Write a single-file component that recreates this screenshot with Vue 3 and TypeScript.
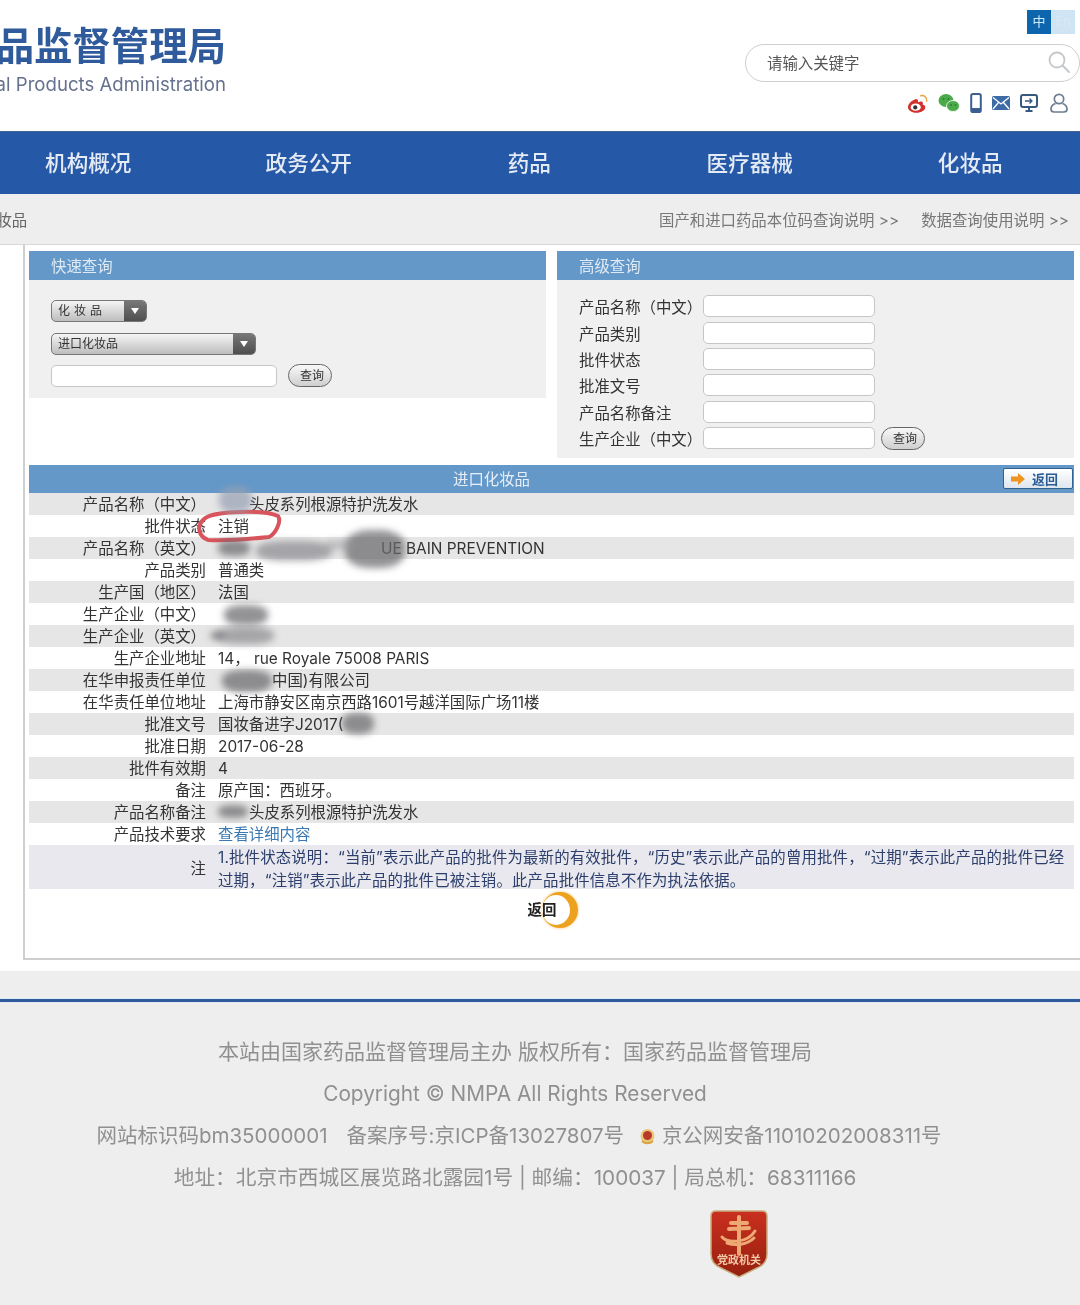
<script setup lang="ts">
interface Row {
  label: string
  value: string
  indent?: number
  link?: boolean
}

const navItems: string[] = ['机构概况', '政务公开', '药品', '医疗器械', '化妆品']

const advancedLabels: string[] = ['产品名称（中文）', '产品类别', '批件状态', '批准文号', '产品名称备注', '生产企业（中文）']

const rows: Row[] = [
  { label: '产品名称（中文）', value: '头皮系列根源特护洗发水', indent: 31 },
  { label: '批件状态', value: '注销' },
  { label: '产品名称（英文）', value: 'UE BAIN PREVENTION', indent: 163 },
  { label: '产品类别', value: '普通类' },
  { label: '生产国（地区）', value: '法国' },
  { label: '生产企业（中文）', value: '' },
  { label: '生产企业（英文）', value: '' },
  { label: '生产企业地址', value: '14， rue Royale 75008 PARIS' },
  { label: '在华申报责任单位', value: '中国)有限公司', indent: 54 },
  { label: '在华责任单位地址', value: '上海市静安区南京西路1601号越洋国际广场11楼' },
  { label: '批准文号', value: '国妆备进字J2017(' },
  { label: '批准日期', value: '2017-06-28' },
  { label: '批件有效期', value: '4' },
  { label: '备注', value: '原产国：西班牙。' },
  { label: '产品名称备注', value: '头皮系列根源特护洗发水', indent: 31 },
  { label: '产品技术要求', value: '查看详细内容', link: true },
]

const smudges: string[] = ['s1', 's2', 's3', 's4', 's5', 's6', 's7', 's8', 's9', 's10', 's11']
</script>

<template>
  <div class="page">
    <header class="top">
      <div class="brand">
        <div class="brand-cn">国家药品监督管理局</div>
        <div class="brand-en">National Medical Products Administration</div>
      </div>
      <div class="tools">
        <div class="lang"><span class="lang-on">中</span><span class="lang-off">En</span></div>
        <div class="search">
          <span>请输入关键字</span>
          <svg width="24" height="24" viewBox="0 0 24 24" fill="none" stroke="#c4c7cb" stroke-width="1.8">
            <circle cx="10" cy="10" r="7.5" />
            <path d="M15.5 15.5 22 22" stroke-linecap="round" />
          </svg>
        </div>
        <div class="icons">
          <svg width="22" height="21" viewBox="0 0 24 22">
            <path d="M10 6c-4 1-9 5-9 9 0 3 4 6 9 6 6 0 10-3 10-6 0-2-2-3-3-3 1-2 0-4-3-3l-2 .6c.4-2-.4-3.600-2-3.600z" fill="#d2322d" />
            <ellipse cx="9.500" cy="15" rx="5.500" ry="4" fill="#fff" />
            <circle cx="9" cy="15.300" r="2.300" fill="#333" />
            <path d="M15 2.500c4-1 7 2 6.500 6" fill="none" stroke="#e8a33c" stroke-width="1.600" stroke-linecap="round" />
          </svg>
          <svg width="22" height="20" viewBox="0 0 22 20">
            <ellipse cx="8" cy="7.500" rx="7.500" ry="6.500" fill="#4bab4a" />
            <ellipse cx="15" cy="13" rx="6.500" ry="5.500" fill="#4bab4a" stroke="#fff" stroke-width=".8" />
            <circle cx="5.500" cy="6" r="1" fill="#2f7d30" />
            <circle cx="10.500" cy="6" r="1" fill="#2f7d30" />
            <circle cx="13" cy="12" r=".9" fill="#2f7d30" />
            <circle cx="17.500" cy="12" r=".9" fill="#2f7d30" />
          </svg>
          <svg width="12" height="20" viewBox="0 0 12 20">
            <rect x="1.200" y="1" width="9.600" height="18" rx="1.800" fill="#fff" stroke="#3c5f92" stroke-width="2" />
            <rect x="2" y="15" width="8" height="3" fill="#3c5f92" />
          </svg>
          <svg width="18" height="14" viewBox="0 0 18 14">
            <rect width="18" height="14" rx="1.500" fill="#3c6ba5" />
            <path d="M1 1.500 9 8l8-6.500M1 13l5.500-6.500M17 13l-5.500-6.500" fill="none" stroke="#fff" stroke-width="1.300" />
          </svg>
          <svg width="18" height="18" viewBox="0 0 18 18">
            <rect x="1" y="1" width="16" height="12" rx="2" fill="#fff" stroke="#36597f" stroke-width="2" />
            <path d="M5 7h7M9.500 4.500 12 7 9.500 9.500" fill="none" stroke="#36597f" stroke-width="1.300" />
            <path d="M9 13v3M5.500 17h7" stroke="#36597f" stroke-width="2" />
          </svg>
          <svg width="18" height="20" viewBox="0 0 18 20" fill="none" stroke="#6f7d91" stroke-width="1.700">
            <circle cx="9" cy="6" r="4.700" />
            <path d="M5.500 10.500C2.800 11.500 1 13.500 1 16c0 2 1 3 3 3h10c2 0 3-1 3-3 0-2.500-1.800-4.500-4.500-5.500" />
          </svg>
        </div>
      </div>
    </header>

    <nav class="nav">
      <a v-for="item in navItems" :key="item" class="nav-item">{{ item }}</a>
    </nav>

    <div class="crumb">
      <span class="crumb-left">化妆品</span>
      <div class="crumb-links">
        <span>国产和进口药品本位码查询说明 &gt;&gt;</span>
        <span>数据查询使用说明 &gt;&gt;</span>
      </div>
    </div>

    <main class="main">
      <div class="panels">
        <section class="panel quick">
          <h3 class="panel-head">快速查询</h3>
          <div class="quick-body">
            <div class="select small">
              <span class="spaced">化妆品</span>
              <i class="arrow"></i>
            </div>
            <div class="select wide">
              <span>进口化妆品</span>
              <i class="arrow"></i>
            </div>
            <div class="search-line">
              <div class="field long"></div>
              <button class="pill">查询</button>
            </div>
          </div>
        </section>
        <section class="panel advanced">
          <h3 class="panel-head">高级查询</h3>
          <div class="adv-body">
            <div v-for="(label, i) in advancedLabels" :key="label" class="adv-row">
              <label>{{ label }}</label>
              <div class="field"></div>
              <button v-if="i === advancedLabels.length - 1" class="pill">查询</button>
            </div>
          </div>
        </section>
      </div>

      <section class="detail">
        <div class="detail-head">
          <span class="detail-title">进口化妆品</span>
          <button class="back">
            <svg width="14" height="12" viewBox="0 0 14 12"><path d="M0 3.500h7V0l7 6-7 6V8.500H0z" fill="#ee9420" /></svg>
            <span>返回</span>
          </button>
        </div>
        <div v-for="row in rows" :key="row.label" class="row">
          <div class="row-label">{{ row.label }}</div>
          <div class="row-value" :class="{ link: row.link }" :style="{ paddingLeft: (row.indent ?? 0) + 'px' }">{{ row.value }}</div>
        </div>
        <div class="row note">
          <div class="row-label">注</div>
          <div class="row-value note-text">1.批件状态说明：“当前”表示此产品的批件为最新的有效批件，“历史”表示此产品的曾用批件，“过期”表示此产品的批件已经<br />过期，“注销”表示此产品的批件已被注销。此产品批件信息不作为执法依据。</div>
        </div>
      </section>

      <div class="return-wrap">
        <div class="moon"><div class="moon-inner"></div><span>返回</span></div>
      </div>
    </main>

    <footer class="footer">
      <p>本站由国家药品监督管理局主办 版权所有：国家药品监督管理局</p>
      <p class="copyright">Copyright © NMPA All Rights Reserved</p>
      <p class="record">
        <span>网站标识码bm35000001</span>
        <span>备案序号:京ICP备13027807号</span>
        <span class="police">
          <svg width="17" height="17" viewBox="0 0 17 17">
            <circle cx="8.500" cy="8" r="7" fill="#e9c67a" />
            <circle cx="8.500" cy="7.500" r="4.500" fill="#b8392a" />
            <path d="M3 13c3 3 8 3 11 0" fill="none" stroke="#d9a441" stroke-width="2" />
          </svg>
          京公网安备11010202008311号
        </span>
      </p>
      <p class="address">地址：北京市西城区展览路北露园1号 | 邮编：100037 | 局总机：68311166</p>
      <svg class="shield" width="58" height="70" viewBox="0 0 58 70">
        <defs>
          <linearGradient id="shieldFill" x1="0" y1="0" x2="0" y2="1">
            <stop offset="0" stop-color="#c9301f" />
            <stop offset="1" stop-color="#96200f" />
          </linearGradient>
        </defs>
        <path d="M6 3h46q5 0 5 5v38q0 10-10 14L29 69 11 60Q1 56 1 46V8q0-5 5-5z" fill="url(#shieldFill)" stroke="#c9ad7f" stroke-width="1.500" />
        <path d="M29 9v37M21 15h16M19 21l20-1" stroke="#eea874" stroke-width="4" fill="none" stroke-linecap="round" />
        <path d="M12 29c5 6 25 7 33-6M17 35c8 3 20 2 27-5" stroke="#eea874" stroke-width="3" fill="none" stroke-linecap="round" />
        <text x="29" y="56" text-anchor="middle" class="shield-text">党政机关</text>
      </svg>
    </footer>

    <svg class="ring" width="90" height="36" viewBox="0 0 90 36">
      <path d="M18 7C35 3 70 2 83 8c4 6-3 18-9 21-19 2-44 4-61 3C3 28 2 18 8 12c3-3 8-5 14-6" fill="none" stroke="#d9545c" stroke-width="4" stroke-linecap="round" />
    </svg>
    <div v-for="s in smudges" :key="s" class="smudge" :class="s"></div>
  </div>
</template>

<style>
html, body { margin: 0; background: #fff; }
</style>

<style scoped>
.page {
  position: relative;
  width: 1080px;
  height: 1305px;
  overflow: hidden;
  background: #fff;
  color: #333;
  font-family: Inter, "Noto Sans CJK SC", sans-serif;
  font-size: 15.4px;
  text-spacing-trim: space-all;
  filter: blur(0.45px);
}

.top {
  height: 131px;
  display: flex;
  justify-content: space-between;
}
.brand {
  width: 226px;
  padding-top: 22px;
  overflow: hidden;
  display: flex;
  flex-direction: column;
  align-items: flex-end;
  white-space: nowrap;
  flex-shrink: 0;
}
.brand-cn {
  font-size: 38.4px;
  line-height: 48px;
  font-weight: 700;
  color: #2f5a9c;
}
.brand-en {
  font-size: 18.6px;
  line-height: 24px;
  margin-top: 2px;
  color: #65718f;
}
.tools {
  width: 335px;
  padding-top: 10px;
  display: flex;
  flex-direction: column;
  align-items: flex-end;
}
.lang {
  display: flex;
  margin-right: 5px;
  height: 24px;
  line-height: 23px;
  font-size: 13px;
  text-align: center;
}
.lang-on { width: 24px; background: #0d65ad; color: #cfe8fb; }
.lang-off { width: 24px; background: #cfe4f5; color: #d8e9f6; }
.search {
  box-sizing: border-box;
  width: 335px;
  height: 38px;
  margin-top: 10px;
  padding: 0 8px 2px 21px;
  border: 1.5px solid #cfcfcf;
  border-radius: 19px;
  display: flex;
  align-items: center;
  justify-content: space-between;
  color: #555;
  font-size: 15.4px;
}
.icons {
  display: flex;
  align-items: center;
  height: 22px;
  margin-top: 10px;
  margin-right: 12px;
  gap: 11px;
}
.icons svg:nth-child(2) { margin-left: -2px; }
.icons svg:nth-child(3) { margin-left: -1px; }
.icons svg:nth-child(4) { margin-left: -1px; }
.icons svg:nth-child(5) { margin-left: -1px; }
.icons svg:nth-child(6) { margin-left: 1px; }

.nav {
  height: 63px;
  margin-left: -22px;
  padding-bottom: 2px;
  box-sizing: border-box;
  display: grid;
  grid-template-columns: repeat(5, 220.5px);
  align-items: center;
  background: #2658a8;
  box-shadow: inset 0 1px 0 #40628f;
}
.nav-item {
  text-align: center;
  font-size: 21.6px;
  font-weight: 500;
  color: #e4ebf5;
}

.crumb {
  height: 51px;
  box-sizing: border-box;
  background: #eeeeee;
  display: flex;
  align-items: center;
  justify-content: space-between;
  color: #777;
  font-size: 15.4px;
  border-bottom: 1px solid #dcd6d6;
}
.crumb-left { margin-left: -19px; color: #666; }
.crumb-links {
  display: flex;
  gap: 22px;
  margin-right: 11px;
}

.main {
  box-sizing: border-box;
  height: 715px;
  margin-left: 23px;
  padding: 6px 6px 0 4px;
  border-left: 2px solid #cfcfcf;
  border-bottom: 2px solid #cfcfcf;
}
.panels {
  height: 214px;
  display: flex;
  align-items: flex-start;
  gap: 11px;
}
.panel {
  flex: 1;
  background: #f0f0f0;
}
.quick { height: 147px; }
.advanced { height: 207px; }
.panel-head {
  margin: 0;
  height: 29px;
  padding-left: 22px;
  background: #6398c9;
  color: #dfeaf5;
  font-size: 15.4px;
  font-weight: 400;
  line-height: 31px;
}
.quick-body {
  padding: 20px 0 0 22px;
  display: flex;
  flex-direction: column;
  align-items: flex-start;
}
.select {
  box-sizing: border-box;
  height: 22px;
  display: flex;
  align-items: center;
  justify-content: space-between;
  padding-left: 6px;
  border: 1.5px solid #777;
  border-radius: 5px;
  background: linear-gradient(#f5f5f5, #bdbdbd);
  font-size: 12px;
  line-height: 16px;
  overflow: hidden;
}
.select span { margin-top: -1px; }
.select.small { width: 96px; }
.select.wide { width: 205px; margin-top: 11px; }
.spaced { letter-spacing: 4px; }
.arrow {
  position: relative;
  width: 22px;
  height: 100%;
  background: linear-gradient(#777, #4f4f4f);
}
.arrow::after {
  content: "";
  position: absolute;
  left: 7px;
  top: 7px;
  border-left: 4px solid transparent;
  border-right: 4px solid transparent;
  border-top: 6px solid #fff;
}
.search-line {
  margin-top: 9px;
  display: flex;
  align-items: center;
  gap: 11px;
}
.field {
  box-sizing: border-box;
  width: 172px;
  height: 22px;
  background: #fff;
  border: 1.5px solid #c6c6c6;
  border-radius: 5px;
}
.field.long { width: 226px; }
.pill {
  box-sizing: border-box;
  width: 44px;
  height: 23px;
  padding: 0 0 2px 4px;
  border: 1.5px solid #666;
  border-radius: 12px;
  background: linear-gradient(#f8f8f8, #cfcfcf);
  color: #333;
  font: 12px "Noto Sans CJK SC", sans-serif;
  line-height: 17px;
}
.adv-body { padding: 13px 0 0 22px; }
.adv-row {
  height: 26.4px;
  display: flex;
  align-items: center;
}
.adv-row label { width: 124px; white-space: nowrap; }
.adv-row .pill { margin-left: 6px; }

.detail-head {
  position: relative;
  height: 28px;
  background: #6398c9;
  color: #e6eef7;
  text-align: center;
  line-height: 29px;
  padding-right: 120px;
}
.detail-title { display: inline-block; }
.back {
  position: absolute;
  right: 1px;
  top: 3px;
  box-sizing: border-box;
  width: 70px;
  height: 21px;
  padding: 0 0 0 7px;
  display: flex;
  align-items: center;
  gap: 7px;
  background: linear-gradient(#fff, #dfe6ee);
  border: 1.5px solid #31628f;
  border-radius: 2px;
  color: #2a5d96;
  font: 700 13px "Noto Sans CJK SC", sans-serif;
}
.row {
  display: grid;
  grid-template-columns: 177px 1fr;
  column-gap: 12px;
  height: 22px;
  line-height: 24px;
  white-space: nowrap;
}
.row:nth-of-type(even) { background: #e6e6e6; }
.row-label { text-align: right; }
.link { color: #3b79b5; }
.row.note {
  height: 44px;
  align-items: center;
  background: #e8e8ee;
}
.note-text {
  color: #2c3f6c;
  letter-spacing: 0.17px;
  line-height: 23px;
  padding-top: 1px;
}

.return-wrap {
  display: flex;
  justify-content: center;
  padding: 3px 0 0 16px;
}
.moon {
  position: relative;
  width: 36px;
  height: 36px;
  border-radius: 50%;
  background: #eda21f;
  box-shadow: 0 0 3px #f3c067;
}
.moon-inner {
  position: absolute;
  left: 0;
  top: 3px;
  width: 28px;
  height: 30px;
  border-radius: 50%;
  background: #fff;
}
.moon span {
  position: absolute;
  left: -14px;
  top: 8px;
  width: 32px;
  font-size: 14.5px;
  font-weight: 700;
  line-height: 20px;
  color: #222;
  white-space: nowrap;
}

.footer {
  margin-top: 11px;
  height: 335px;
  box-sizing: border-box;
  background: #eeeeee;
  padding-top: 28px;
  padding-right: 50px;
  color: #909090;
  font-size: 21px;
  text-align: center;
  position: relative;
}
.footer::before {
  content: "";
  display: block;
  height: 3px;
  margin-right: -50px;
  background: #2f5a9c;
  box-shadow: 0 -1px 0 #dbe8f8, 0 1px 0 #e3eaf6;
}
.footer p {
  margin: 0;
  line-height: 42px;
  white-space: nowrap;
}
.footer p:first-of-type { margin-top: 29px; }
.footer .copyright { font-size: 20.8px; }
.footer .address { font-size: 20.7px; }
.record {
  display: flex;
  justify-content: center;
  gap: 19px;
  padding-left: 8px;
  font-size: 20.5px;
}
.police svg { vertical-align: -2px; }
.police { margin-left: -4px; }
.shield {
  display: block;
  margin: 9px 0 0 710px;
}
.shield-text {
  font-size: 11px;
  font-weight: 700;
  fill: #f3c9a8;
  font-family: "Noto Sans CJK SC", sans-serif;
}

.ring {
  position: absolute;
  left: 195px;
  top: 508px;
}
.smudge {
  position: absolute;
  border-radius: 40%;
  background: rgba(105, 105, 110, .72);
  filter: blur(3.5px);
}
.s1 { left: 219px; top: 486px; width: 33px; height: 27px; background: rgba(150, 160, 178, .7); }
.s2 { left: 218px; top: 540px; width: 32px; height: 16px; }
.s3 { left: 256px; top: 541px; width: 76px; height: 20px; background: rgba(125, 125, 130, .62); }
.s4 { left: 345px; top: 530px; width: 60px; height: 38px; }
.s5 { left: 224px; top: 605px; width: 44px; height: 20px; }
.s6 { left: 216px; top: 627px; width: 58px; height: 17px; background: rgba(130, 130, 135, .65); }
.s7 { left: 222px; top: 670px; width: 50px; height: 22px; }
.s8 { left: 342px; top: 713px; width: 32px; height: 21px; }
.s9 { left: 218px; top: 805px; width: 30px; height: 13px; }
.s10 { left: 325px; top: 540px; width: 30px; height: 10px; background: rgba(150, 150, 155, .5); }
.s11 { left: 210px; top: 632px; width: 14px; height: 7px; }
</style>
